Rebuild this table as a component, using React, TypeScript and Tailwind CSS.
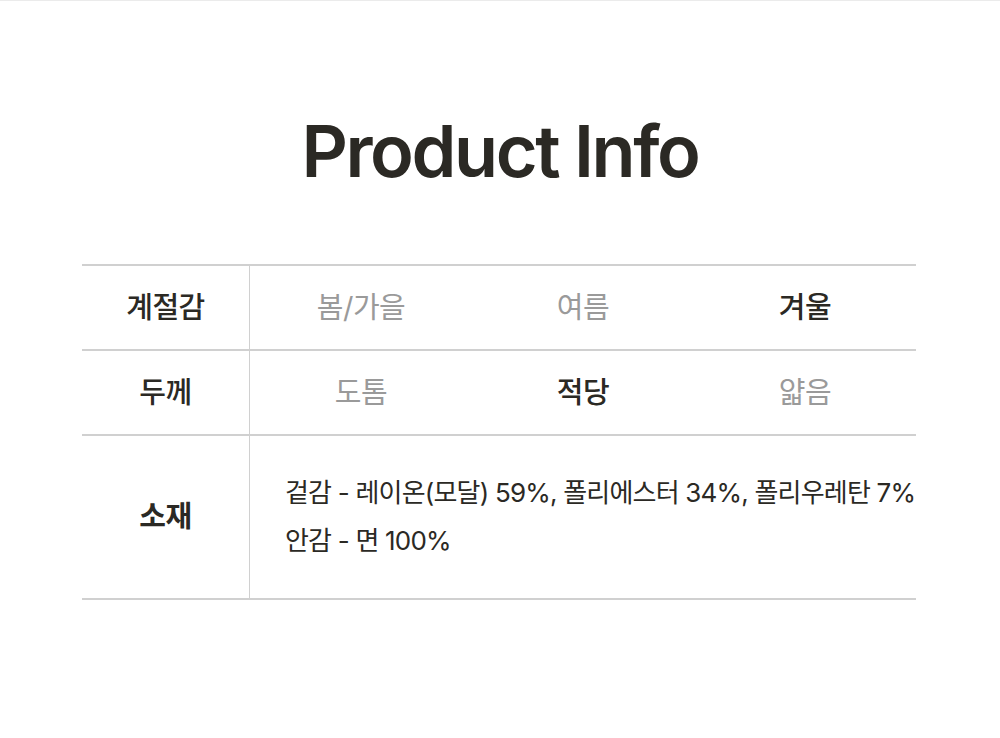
import React from 'react';

const font = { fontFamily: 'Inter, "Noto Sans CJK KR", sans-serif' };

const Option = ({ label, active }: { label: string; active?: boolean }) => (
  <div className={`flex-1 flex items-center justify-center ${active ? 'text-[#2b2924] font-medium' : 'text-[#9a9a9a]'}`}>
    {label}
  </div>
);

export default function App() {
  return (
    <div className="w-[1000px] h-[738px] bg-white border-t border-[#ebebeb] text-[#2b2924]" style={font}>
      <h1 className="pt-[100px] text-center text-[72px] leading-[100px] font-semibold tracking-[-2.4px]">Product Info</h1>

      <div className="ml-[82px] mr-[84px] mt-[63px] border-t-2 border-[#d0d0d0]">
        <div className="flex h-[85px] border-b-2 border-[#d0d0d0] text-[29px] tracking-[-0.5px]">
          <div className="w-[168px] shrink-0 border-r border-[#d0d0d0] flex items-center justify-center font-medium">계절감</div>
          <div className="flex-1 flex">
            <Option label="봄/가을" />
            <Option label="여름" />
            <Option label="겨울" active />
          </div>
        </div>
        <div className="flex h-[85px] border-b-2 border-[#d0d0d0] text-[29px] tracking-[-0.5px]">
          <div className="w-[168px] shrink-0 border-r border-[#d0d0d0] flex items-center justify-center font-medium">두께</div>
          <div className="flex-1 flex">
            <Option label="도톰" />
            <Option label="적당" active />
            <Option label="얇음" />
          </div>
        </div>
        <div className="flex h-[164px] border-b-2 border-[#d0d0d0]">
          <div className="w-[168px] shrink-0 border-r border-[#d0d0d0] flex items-center justify-center font-bold text-[29px] tracking-[-0.5px]">소재</div>
          <div className="flex-1 min-w-0 flex flex-col justify-center pl-[35px] text-[26px] tracking-[-0.8px] leading-[48px] whitespace-nowrap">
            <p>겉감 - 레이온(모달) 59%, 폴리에스터 34%, 폴리우레탄 7%</p>
            <p>안감 - 면 100%</p>
          </div>
        </div>
      </div>
    </div>
  );
}
